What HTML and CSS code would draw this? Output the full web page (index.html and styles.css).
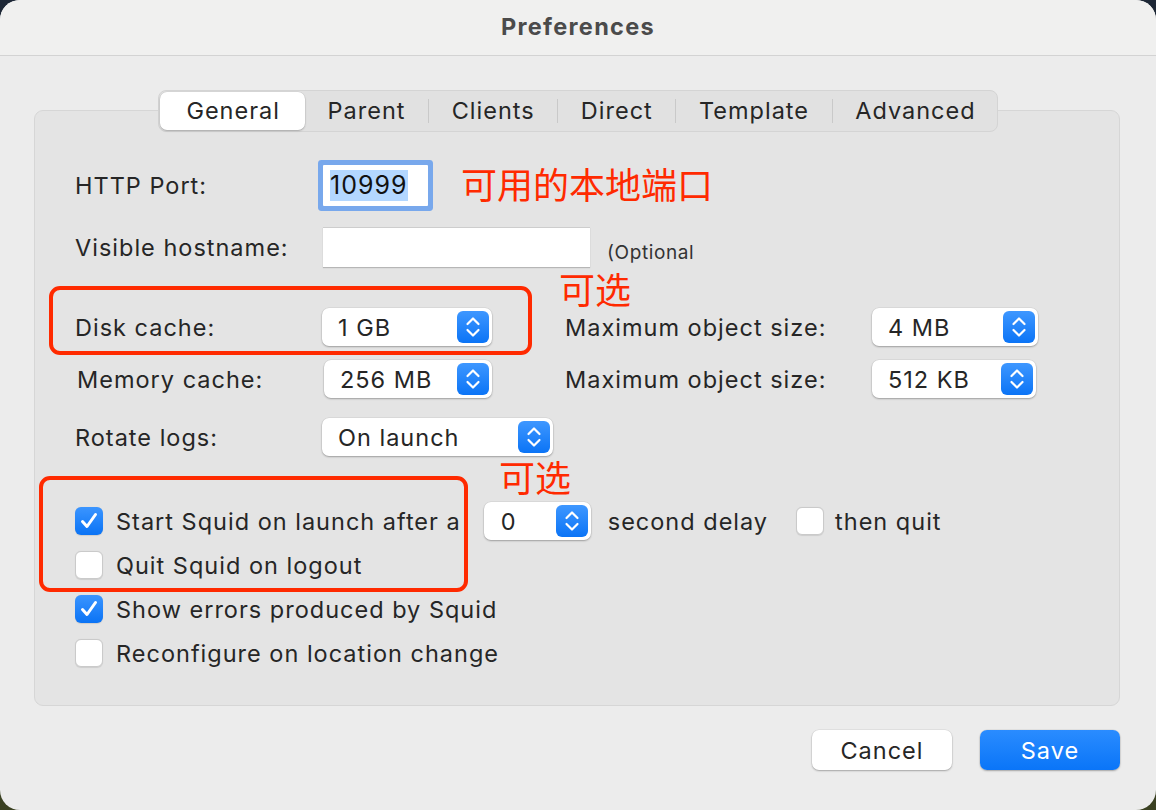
FILE: index.html
```html
<!DOCTYPE html>
<html>
<head>
<meta charset="utf-8">
<link rel="stylesheet" href="styles.css">
</head>
<body>
<div class="window">
  <div class="titlebar">Preferences</div>
  <div class="content">
    <div class="tabs">
      <div class="tab selected">General</div>
      <div class="tab">Parent</div>
      <span class="sep"></span>
      <div class="tab">Clients</div>
      <span class="sep"></span>
      <div class="tab">Direct</div>
      <span class="sep"></span>
      <div class="tab">Template</div>
      <span class="sep"></span>
      <div class="tab">Advanced</div>
    </div>
    <div class="groupbox">
      <div class="row row-port">
        <span class="label">HTTP Port:</span>
        <div class="field focus"><span class="sel">10999</span></div>
      </div>
      <div class="row row-host">
        <span class="label">Visible hostname:</span>
        <div class="field host"></div>
        <span class="small">(Optional</span>
      </div>
      <div class="row row-disk">
        <span class="label">Disk cache:</span>
        <div class="popup w170"><span>1 GB</span><i class="stepper"></i></div>
        <span class="label2">Maximum object size:</span>
        <div class="popup w166"><span>4 MB</span><i class="stepper"></i></div>
      </div>
      <div class="row row-mem shift">
        <span class="label">Memory cache:</span>
        <div class="popup w168"><span>256 MB</span><i class="stepper"></i></div>
        <span class="label2">Maximum object size:</span>
        <div class="popup w164"><span>512 KB</span><i class="stepper"></i></div>
      </div>
      <div class="row row-rot">
        <span class="label">Rotate logs:</span>
        <div class="popup w231"><span>On launch</span><i class="stepper"></i></div>
      </div>
      <div class="row row-start">
        <span class="cb checked"></span>
        <span class="cbtext">Start Squid on launch after a</span>
        <div class="popup w107 delay"><span>0</span><i class="stepper"></i></div>
        <span class="cbtext delaytext">second delay</span>
        <span class="cb quitcb"></span>
        <span class="cbtext">then quit</span>
      </div>
      <div class="row row-cb">
        <span class="cb"></span>
        <span class="cbtext">Quit Squid on logout</span>
      </div>
      <div class="row row-cb">
        <span class="cb checked"></span>
        <span class="cbtext">Show errors produced by Squid</span>
      </div>
      <div class="row row-cb">
        <span class="cb"></span>
        <span class="cbtext">Reconfigure on location change</span>
      </div>
    </div>
    <div class="buttons">
      <button class="btn">Cancel</button>
      <button class="btn primary">Save</button>
    </div>
  </div>
  <div class="note note1">可用的本地端口</div>
  <div class="note note2">可选</div>
  <div class="note note3">可选</div>
  <div class="box box1"></div>
  <div class="box box2"></div>
</div>
</body>
</html>
```
FILE: styles.css
```css
html, body {
  margin: 0;
  padding: 0;
}
body {
  width: 1156px;
  height: 810px;
  background: linear-gradient(180deg, #1d2736 0%, #2b3328 60%, #3b4122 100%);
  font-family: "Inter", "Noto Sans", sans-serif;
  color: #262626;
  letter-spacing: 1px;
  overflow: hidden;
}
.window {
  position: relative;
  width: 1156px;
  height: 810px;
  background: #ececec;
  border-radius: 20px;
  overflow: hidden;
}
.titlebar {
  height: 56px;
  box-sizing: border-box;
  background: #f0f0ef;
  border-bottom: 1px solid #d3d3d3;
  text-align: center;
  font-weight: 700;
  font-size: 23.5px;
  letter-spacing: 1.3px;
  line-height: 54px;
  color: #4b4b4b;
}
.content {
  padding: 34px 36px 0 34px;
}
.tabs {
  position: relative;
  z-index: 1;
  display: flex;
  align-items: center;
  width: max-content;
  margin: 0 auto;
  height: 42px;
  box-sizing: border-box;
  background: #e1e1e1;
  border: 1px solid #d4d4d4;
  border-radius: 8px;
  padding: 0 0 0 1px;
  transform: translateX(1px);
}
.tab {
  font-size: 23.5px;
  padding: 0 22.6px;
  line-height: 38px;
  color: #262626;
}
.tab:last-child { padding-right: 21px; }
.tab.selected {
  background: #fff;
  border-radius: 7px;
  box-shadow: 0 1px 2px rgba(0,0,0,0.22), 0 0 0 0.5px rgba(0,0,0,0.08);
  padding: 0 25px 0 26px;
}
.sep {
  width: 1px;
  height: 24px;
  background: #c9c9c9;
}
.groupbox {
  margin-top: -22px;
  height: 596px;
  box-sizing: border-box;
  background: #e4e4e4;
  border: 1px solid #d6d6d6;
  border-radius: 9px;
  padding: 49px 0 0 40px;
}
.row {
  display: flex;
  align-items: center;
  font-size: 23.5px;
}
.label {
  width: 247px;
  flex: none;
}
.row-port { height: 51px; }
.row-host { height: 40px; margin-top: 16px; }
.row-disk { height: 38px; margin-top: 41px; }
.row-mem { height: 38px; margin-top: 14px; }
.row-rot { height: 38px; margin-top: 20px; }
.row-start { height: 44px; margin-top: 43px; }
.row-cb { height: 44px; }
.shift { padding-left: 2px; }
.field {
  background: #fff;
  box-sizing: border-box;
}
.field.focus {
  width: 105px;
  height: 41px;
  margin-left: 1px;
  box-shadow: 0 0 0 5px #78a8ec;
  border-radius: 1px;
  display: flex;
  align-items: center;
  padding-left: 7px;
  font-size: 25px;
  color: #111;
}
.sel {
  background: #b3d7ff;
  line-height: 31px;
  padding-right: 1px;
}
.field.host {
  width: 267px;
  height: 40px;
  margin-left: 1px;
  border-top: 1px solid #cdcdcd;
  box-shadow: 0 1px 1px rgba(0,0,0,0.2);
}
.small {
  font-size: 19px;
  letter-spacing: 0.6px;
  margin-left: 17px;
  margin-top: 10px;
  color: #333;
}
.popup {
  position: relative;
  box-sizing: border-box;
  height: 38px;
  background: #fff;
  border-radius: 7px;
  box-shadow: 0 1px 2px rgba(0,0,0,0.28), 0 0 0 0.5px rgba(0,0,0,0.08);
  display: flex;
  align-items: center;
  justify-content: space-between;
  padding: 0 3px 0 16px;
  flex: none;
}
.w170 { width: 170px; }
.w168 { width: 168px; }
.w166 { width: 166px; }
.w164 { width: 164px; }
.w231 { width: 231px; }
.w107 { width: 107px; padding-left: 17px; }
.stepper {
  width: 32px;
  height: 32px;
  border-radius: 6px;
  display: block;
  background-image:
    url("data:image/svg+xml,%3Csvg xmlns='http://www.w3.org/2000/svg' width='32' height='32'%3E%3Cpath d='M10.5 13 L16 7.5 L21.5 13 M10.5 19 L16 24.5 L21.5 19' fill='none' stroke='white' stroke-width='2.2' stroke-linecap='round' stroke-linejoin='round'/%3E%3C/svg%3E"),
    linear-gradient(180deg, #3e97ff 0%, #0b74f6 100%);
}
.label2 {
  margin-left: 73px;
  width: 307px;
  flex: none;
}
.cb {
  width: 28px;
  height: 28px;
  box-sizing: border-box;
  border-radius: 6px;
  background: #fff;
  border: 1px solid #cacaca;
  box-shadow: 0 0.5px 1px rgba(0,0,0,0.1);
  flex: none;
}
.cb.checked {
  border: none;
  background-image:
    url("data:image/svg+xml,%3Csvg xmlns='http://www.w3.org/2000/svg' width='28' height='28'%3E%3Cpath d='M7.5 14.5 L12 19.5 L20.5 7.5' fill='none' stroke='white' stroke-width='3' stroke-linecap='round' stroke-linejoin='round'/%3E%3C/svg%3E"),
    linear-gradient(180deg, #3b95ff 0%, #0a73f5 100%);
}
.cbtext {
  margin-left: 13px;
}
.delay { margin-left: 23px; }
.delaytext { margin-left: 17px; }
.quitcb { margin-left: 28px; }
.row-start .cbtext:last-child { margin-left: 11px; }
.buttons {
  display: flex;
  justify-content: flex-end;
  gap: 28px;
  margin-top: 24px;
}
.btn {
  width: 140px;
  height: 40px;
  border: none;
  border-radius: 7px;
  font-family: inherit;
  font-size: 23.5px;
  letter-spacing: 1px;
  background: #fff;
  color: #262626;
  box-shadow: 0 1px 2px rgba(0,0,0,0.28), 0 0 0 0.5px rgba(0,0,0,0.08);
}
.btn.primary {
  background: linear-gradient(180deg, #2a8cff 0%, #0a75f8 100%);
  color: #fff;
}
.note {
  position: absolute;
  color: #ff2a00;
  font-family: "Noto Sans CJK SC", sans-serif;
  font-size: 36px;
  letter-spacing: 0;
  line-height: 1;
}
.note1 { left: 461px; top: 165px; }
.note2 { left: 559px; top: 270px; }
.note3 { left: 499px; top: 458px; }
.box {
  position: absolute;
  border: 4px solid #ff2a00;
  border-radius: 11px;
  box-sizing: border-box;
}
.box1 { left: 49px; top: 286px; width: 483px; height: 69px; }
.box2 { left: 39px; top: 476px; width: 429px; height: 116px; }
```
